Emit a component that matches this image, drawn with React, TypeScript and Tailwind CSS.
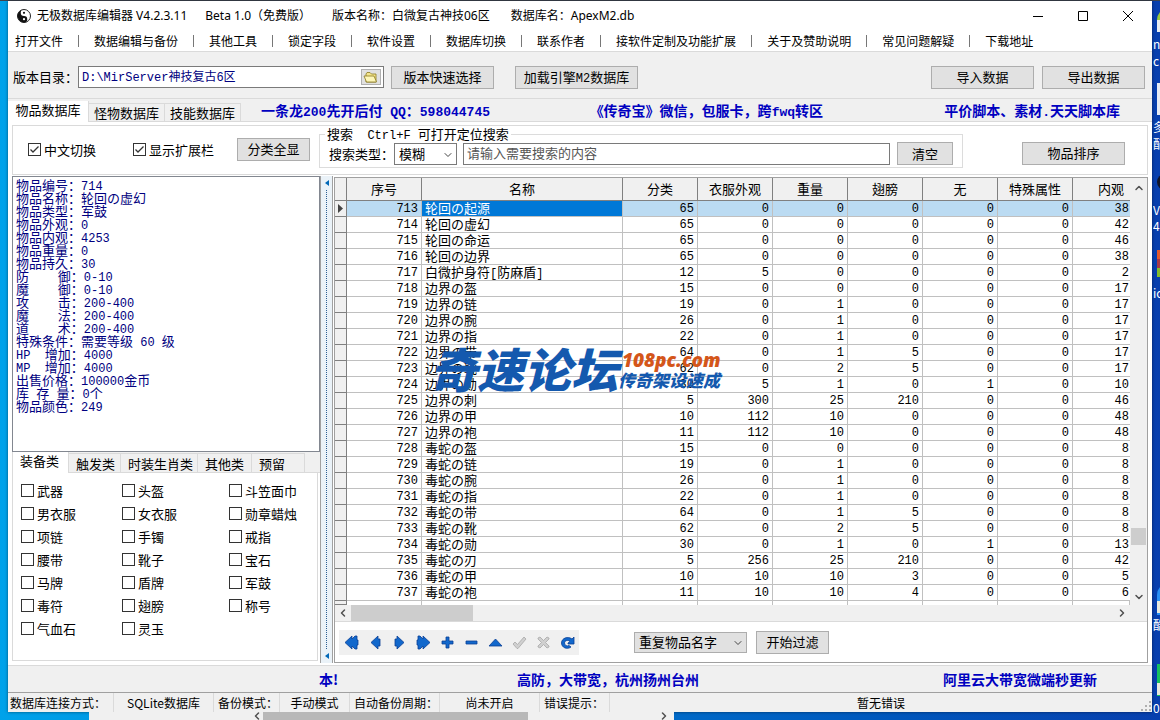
import { useState } from "react";
import { ChevronDown, ChevronLeft, ChevronRight, ChevronUp } from "lucide-react";

const menuItems = [
  "打开文件", "数据编辑与备份", "其他工具", "锁定字段", "软件设置", "数据库切换",
  "联系作者", "接软件定制及功能扩展", "关于及赞助说明", "常见问题解疑", "下载地址",
];

const details = [
  "物品编号：714",
  "物品名称：轮回の虚幻",
  "物品类型：军鼓",
  "物品外观：0",
  "物品内观：4253",
  "物品重量：0",
  "物品持久：30",
  "防    御：0-10",
  "魔    御：0-10",
  "攻    击：200-400",
  "魔    法：200-400",
  "道    术：200-400",
  "特殊条件：需要等级 60 级",
  "HP  增加：4000",
  "MP  增加：4000",
  "出售价格：100000金币",
  "库 存 量：0个",
  "物品颜色：249",
];

const categories = [
  ["武器", "头盔", "斗笠面巾"],
  ["男衣服", "女衣服", "勋章蜡烛"],
  ["项链", "手镯", "戒指"],
  ["腰带", "靴子", "宝石"],
  ["马牌", "盾牌", "军鼓"],
  ["毒符", "翅膀", "称号"],
  ["气血石", "灵玉"],
];

const categoryTabs = [
  { label: "装备类", width: "w-[57px]" },
  { label: "触发类", width: "w-[52px]" },
  { label: "时装生肖类", width: "w-[77px]" },
  { label: "其他类", width: "w-[54px]" },
  { label: "预留", width: "w-[53px]" },
];

const columns = ["序号", "名称", "分类", "衣服外观", "重量", "翅膀", "无", "特殊属性", "内观"];

type Row = [number, string, ...number[]];

const rows: Row[] = [
  [713, "轮回の起源", 65, 0, 0, 0, 0, 0, 38],
  [714, "轮回の虚幻", 65, 0, 0, 0, 0, 0, 42],
  [715, "轮回の命运", 65, 0, 0, 0, 0, 0, 46],
  [716, "轮回の边界", 65, 0, 0, 0, 0, 0, 38],
  [717, "白微护身符[防麻盾]", 12, 5, 0, 0, 0, 0, 2],
  [718, "边界の盔", 15, 0, 0, 0, 0, 0, 17],
  [719, "边界の链", 19, 0, 1, 0, 0, 0, 17],
  [720, "边界の腕", 26, 0, 1, 0, 0, 0, 17],
  [721, "边界の指", 22, 0, 1, 0, 0, 0, 17],
  [722, "边界の带", 64, 0, 1, 5, 0, 0, 17],
  [723, "边界の靴", 62, 0, 2, 5, 0, 0, 17],
  [724, "边界の勋", 30, 5, 1, 0, 1, 0, 10],
  [725, "边界の刺", 5, 300, 25, 210, 0, 0, 46],
  [726, "边界の甲", 10, 112, 10, 0, 0, 0, 48],
  [727, "边界の袍", 11, 112, 10, 0, 0, 0, 48],
  [728, "毒蛇の盔", 15, 0, 0, 0, 0, 0, 8],
  [729, "毒蛇の链", 19, 0, 1, 0, 0, 0, 8],
  [730, "毒蛇の腕", 26, 0, 1, 0, 0, 0, 8],
  [731, "毒蛇の指", 22, 0, 1, 0, 0, 0, 8],
  [732, "毒蛇の带", 64, 0, 1, 5, 0, 0, 8],
  [733, "毒蛇の靴", 62, 0, 2, 5, 0, 0, 8],
  [734, "毒蛇の勋", 30, 0, 1, 0, 1, 0, 13],
  [735, "毒蛇の刃", 5, 256, 25, 210, 0, 0, 42],
  [736, "毒蛇の甲", 10, 10, 10, 3, 0, 0, 5],
  [737, "毒蛇の袍", 11, 10, 10, 4, 0, 0, 6],
];

const navIcons = [
  { label: "首条", d: "M8 1 L1 7.5 L8 14 V11 L11 14 H13 V10 H14 V5 H13 V1 H11 L8 4 Z" },
  { label: "上一条", d: "M10 1 L3 7.5 L10 14 V11 H12 V4 H10 Z" },
  { label: "下一条", d: "M5 1 L12 7.5 L5 14 V11 H3 V4 H5 Z" },
  { label: "末条", d: "M7 1 L14 7.5 L7 14 V11 L4 14 H2 V10 H1 V5 H2 V1 H4 L7 4 Z" },
  { label: "新增", d: "M6 2 H9 V6 H13 V9 H9 V13 H6 V9 H2 V6 H6 Z" },
  { label: "删除", d: "M2 6 H13 V9 H2 Z" },
  { label: "编辑", d: "M7.5 4 L14 11 H1 Z" },
  { label: "保存", d: "M1 9 L3 7 L5.5 9.5 L12 2 L14 4 L6 13.5 H5 Z", off: true },
  { label: "取消", d: "M2 3 L4 2 L7.5 5.5 L11 2 L13 3 V4 L9.5 7.5 L13 11 V12 L11 13 L7.5 9.5 L4 13 L2 12 V11 L5.5 7.5 L2 4 Z", off: true },
  { label: "刷新", d: "M14 2 V9 H8 V8 L10 6.5 C8 4.5 4.5 5.5 4.5 8 C4.5 10.5 7 11.5 9 10.5 L11 12 C7 15 1.5 12.5 1.5 8 C1.5 3 8 1 12 4 Z" },
];

const status = [
  { text: "数据库连接方式：" },
  { text: "SQLite数据库", center: true },
  { text: "备份模式：" },
  { text: "手动模式", center: true },
  { text: "自动备份周期：" },
  { text: "尚未开启", center: true },
  { text: "错误提示：" },
  { text: "暂无错误", center: true },
];

// ASCII runs go into the mono face one size down, so two of them fill one ideograph
function Mix({ text, size = "text-xs" }: { text: string; size?: string }) {
  return (
    <>
      {text.split(/([\x20-\x7e]+)/).map((part, i) =>
        i % 2 ? (
          <span key={i} className={`font-['Liberation_Mono',monospace] leading-none ${size}`}>{part}</span>
        ) : (
          part
        )
      )}
    </>
  );
}

function Button({ text, className = "" }: { text: string; className?: string }) {
  return (
    <button
      type="button"
      className={`h-[23px] shrink-0 whitespace-pre border border-[#adadad] bg-[#e1e1e1] leading-[20px] hover:border-[#0078d7] hover:bg-[#e5f1fb] ${className}`}
    >
      <Mix text={text} />
    </button>
  );
}

function CheckBox({ label, checked = false }: { label: string; checked?: boolean }) {
  return (
    <label className="flex items-center gap-[3px] leading-[15px]">
      <span className="relative size-[13px]">
        <input
          type="checkbox"
          defaultChecked={checked}
          className="peer block size-[13px] appearance-none border border-[#333] bg-white"
        />
        <svg
          viewBox="0 0 13 13"
          className="pointer-events-none absolute inset-0 hidden size-[13px] peer-checked:block"
          fill="none"
          stroke="#333"
          strokeWidth="1.3"
        >
          <path d="M2.5 6.5 L5 9 L10.5 3.5" />
        </svg>
      </span>
      {label}
    </label>
  );
}

function TitleBar() {
  return (
    <header className="flex h-[29px] items-center justify-between bg-white pl-[9px] font-['Noto_Sans','Noto_Sans_CJK_SC',sans-serif] text-xs">
      <div className="flex items-center whitespace-nowrap">
        <svg viewBox="0 0 14 14" className="mr-1.5 size-[14px]">
          <circle cx="7" cy="7" r="6.5" fill="#fff" stroke="#222" />
          <path d="M7 .5 A6.5 6.5 0 0 0 7 13.5 A3.25 3.25 0 0 0 7 7 A3.25 3.25 0 0 1 7 .5" fill="#111" />
          <circle cx="7" cy="3.8" r="1.1" fill="#111" />
          <circle cx="7" cy="10.2" r="1.1" fill="#fff" />
        </svg>
        <h1 className="mr-[18px]">无极数据库编辑器 V4.2.3.11</h1>
        <span className="mr-[21px]">Beta 1.0（免费版）</span>
        <span className="mr-[21px]">版本名称：白微复古神技06区</span>
        <span>数据库名：ApexM2.db</span>
      </div>
      <div className="flex pr-0.5">
        {[
          { label: "最小化", d: "M0 5.5 H10" },
          { label: "最大化", d: "M.5 .5 H9.5 V9.5 H.5 Z" },
          { label: "关闭", d: "M0 0 L10 10 M10 0 L0 10" },
        ].map((b) => (
          <button key={b.label} type="button" aria-label={b.label} className="flex h-7 w-[45px] items-center justify-center hover:bg-[#e5e5e5]">
            <svg viewBox="0 0 10 10" className="size-[10px] overflow-visible" fill="none" stroke="#000">
              <path d={b.d} />
            </svg>
          </button>
        ))}
      </div>
    </header>
  );
}

function MenuBar() {
  return (
    <nav className="flex h-[22px] items-center gap-[15px] border-b border-[#dadada] bg-white pl-[7px] text-xs">
      {menuItems.map((item, i) => (
        <div key={item} className="flex items-center gap-[15px]">
          {i > 0 && <span className="h-3 w-px bg-[#777]" />}
          <button type="button" className="whitespace-nowrap leading-[18px]">{item}</button>
        </div>
      ))}
    </nav>
  );
}

function Toolbar() {
  return (
    <div className="flex h-[46px] items-center pt-1 pl-[5px] pr-[7px]">
      <label htmlFor="dir" className="w-[65px] shrink-0 whitespace-nowrap">版本目录：</label>
      <div className="flex h-[22px] w-[306px] items-center border border-[#7a7a7a] bg-white pr-0.5">
        <input
          id="dir"
          defaultValue="D:\MirServer神技复古6区"
          className="min-w-0 flex-1 bg-transparent pt-0.5 pl-[3px] font-['Liberation_Mono','Noto_Sans_CJK_SC',monospace] text-xs text-[#000080] outline-none"
        />
        <button type="button" aria-label="浏览" className="flex h-4 w-5 items-center justify-center border border-[#b0b0b0] bg-[#e1e1e1]">
          <svg viewBox="0 0 16 12" className="h-3 w-4">
            <path d="M3 11 V3 L4 1.5 H7 L8.5 3 H13 V11 Z" fill="#f3e48c" stroke="#8a7a20" strokeWidth=".8" />
            <path d="M1 5 H11 L13.5 11 H3.5 Z" fill="#fdf6b8" stroke="#8a7a20" strokeWidth=".8" />
          </svg>
        </button>
      </div>
      <Button text="版本快速选择" className="ml-[7px] w-[103px]" />
      <Button text="加载引擎M2数据库" className="ml-[21px] w-[123px]" />
      <div className="ml-auto flex gap-2">
        <Button text="导入数据" className="w-[103px]" />
        <Button text="导出数据" className="w-[103px]" />
      </div>
    </div>
  );
}

function DatabaseTabs() {
  const [active, setActive] = useState(0);
  return (
    <div className="flex h-6 items-end border-t border-[#dadada]">
      <div role="tablist" className="flex h-full items-end">
        {["物品数据库", "怪物数据库", "技能数据库"].map((t, i) => (
          <button
            key={t}
            type="button"
            role="tab"
            aria-selected={i === active}
            onClick={() => setActive(i)}
            className={
              i === active
                ? "h-[21px] w-[81px] border-r border-[#dadada] bg-white pb-1 leading-[17px]"
                : "h-[19px] w-[76px] border-t border-r border-b border-[#dadada] leading-[17px]"
            }
          >
            {t}
          </button>
        ))}
      </div>
      <div className="grid h-full flex-1 grid-cols-[329fr_355fr_208fr] items-center whitespace-nowrap border-b border-[#dadada] pl-5 text-sm font-bold text-[#0000c0]">
        <span><Mix size="text-[13px]" text="一条龙200先开后付 QQ：598044745" /></span>
        <span><Mix size="text-[13px]" text="《传奇宝》微信，包服卡，跨fwq转区" /></span>
        <span><Mix size="text-[13px]" text="平价脚本、素材.天天脚本库" /></span>
      </div>
    </div>
  );
}

function SearchPanel() {
  return (
    <div className="flex h-[50px] items-start border border-[#dadada] bg-white pr-[22px]">
      <div className="flex h-[46px] items-center pl-[15px]">
        <div className="w-[105px]"><CheckBox label="中文切换" checked /></div>
        <div className="w-[104px]"><CheckBox label="显示扩展栏" checked /></div>
        <Button text="分类全显" className="w-[73px]" />
      </div>
      <fieldset className="ml-[9px] h-[42px] w-[644px] border border-[#dcdcdc] pl-[9px]">
        <legend className="-ml-1 whitespace-pre px-0.5 leading-[16px]">
          <Mix text="搜索  Ctrl+F 可打开定位搜索" />
        </legend>
        <div className="flex items-center">
          <label htmlFor="kind" className="w-[65px] whitespace-nowrap">搜索类型：</label>
          <div className="relative">
            <select id="kind" className="block h-[22px] w-[63px] appearance-none border border-[#7a7a7a] bg-white pl-1 leading-[18px]">
              <option>模糊</option>
              <option>精确</option>
            </select>
            <ChevronDown size={12} strokeWidth={2} className="pointer-events-none absolute top-1.5 right-[3px] text-[#444]" />
          </div>
          <input
            aria-label="搜索内容"
            placeholder="请输入需要搜索的内容"
            className="ml-1.5 h-[22px] min-w-0 flex-1 border border-[#7a7a7a] bg-white pb-0.5 pl-[3px] placeholder:text-[#555] outline-none"
          />
          <Button text="清空" className="mr-[9px] ml-[7px] w-14" />
        </div>
      </fieldset>
      <div className="ml-auto flex h-[54px] items-center">
        <Button text="物品排序" className="w-[103px]" />
      </div>
    </div>
  );
}

function CategoryPanel() {
  const [active, setActive] = useState(0);
  return (
    <div>
      <div role="tablist" className="flex h-[21px] items-end bg-[#f0f0f0]">
        {categoryTabs.map((t, i) => (
          <button
            key={t.label}
            type="button"
            role="tab"
            aria-selected={i === active}
            onClick={() => setActive(i)}
            className={`${t.width} pl-[7px] text-left leading-[17px] whitespace-nowrap border-r border-[#dadada] ${
              i === active ? "h-[21px] border-l bg-white pb-1" : "h-5 border-t border-b"
            }`}
          >
            {t.label}
          </button>
        ))}
        <div className="flex-1 self-stretch border-b border-[#dadada]" />
      </div>
      <div className="mr-0.5 border border-t-0 border-[#dadada] bg-white pt-1.5 pb-5 pl-2">
        {categories.map((line) => (
          <div key={line[0]} className="grid h-[23px] grid-cols-[101px_107px_1fr] items-center">
            {line.map((c) => <CheckBox key={c} label={c} />)}
          </div>
        ))}
      </div>
    </div>
  );
}

function Splitter() {
  return (
    <div className="flex w-[13px] flex-col items-center border-x border-[#a0a0a0] bg-[#eaf2f8] py-1">
      <svg viewBox="0 0 4 6" className="h-1.5 w-1"><path d="M4 0 L0 3 L4 6 Z" fill="#0068b8" /></svg>
      <div className="my-1 flex-1 border-l border-dotted border-[#2b5f94]" />
      <svg viewBox="0 0 4 6" className="h-1.5 w-1"><path d="M4 0 L0 3 L4 6 Z" fill="#0068b8" /></svg>
    </div>
  );
}

function ItemTable() {
  const head = "h-[23px] border-r border-b border-[#808080] bg-[#f0f0f0] p-0 font-normal";
  const gutter = "border-r border-b border-[#808080] bg-[#f0f0f0] p-0";
  return (
    <table className="w-full table-fixed border-separate border-spacing-0">
      <colgroup>
        <col className="w-3" />
        <col className="w-[75px]" />
        <col />
        {columns.slice(2, 8).map((c) => <col key={c} className="w-[75px]" />)}
        <col className="w-[57px]" />
      </colgroup>
      <thead>
        <tr>
          <th className={head} aria-label="当前行" />
          {columns.map((c, i) => (
            <th key={c} className={i === 8 ? "h-[23px] border-b border-[#808080] bg-[#f0f0f0] p-0 pr-1.5 text-right font-normal" : head}>
              {c}
            </th>
          ))}
        </tr>
      </thead>
      <tbody>
        {rows.map((row, r) => (
          <tr key={row[0]} className={r === 0 ? "bg-[#bbdbf2]" : ""}>
            <td className={gutter}>
              {r === 0 && (
                <svg viewBox="0 0 5 9" className="mx-auto h-[9px] w-[5px]"><path d="M0 0 L5 4.5 L0 9 Z" fill="#444" /></svg>
              )}
            </td>
            {row.map((cell, i) =>
              i === 1 ? (
                <td
                  key={i}
                  className={`h-4 border-r border-b border-[#c0c0c0] p-0 pb-0.5 pl-[3px] ${
                    r === 0 ? "bg-[#0078d7] text-white" : ""
                  }`}
                >
                  <div className="h-[13px] leading-[13px] whitespace-nowrap">
                    <Mix text={String(cell)} />
                  </div>
                </td>
              ) : (
                <td
                  key={i}
                  className={`h-4 border-b border-[#c0c0c0] p-0 pt-0.5 text-right font-['Liberation_Mono',monospace] text-xs leading-[13px] ${
                    i === 8 ? "pr-px" : "border-r pr-[3px]"
                  }`}
                >
                  {cell}
                </td>
              )
            )}
          </tr>
        ))}
        <tr className="h-1">
          <td className={gutter} />
          {columns.map((c) => <td key={c} className="border-r border-[#c0c0c0] p-0" />)}
        </tr>
      </tbody>
    </table>
  );
}

function Watermark() {
  return (
    <div className="pointer-events-none absolute top-[165px] left-[95px] flex items-center whitespace-nowrap font-black text-[#1459ae] italic">
      <span className="text-[47px] leading-[50px]">奇速论坛</span>
      <div className="pt-1">
        <div className="pl-1 font-['Open_Sans',sans-serif] text-[19px] leading-[20px] font-extrabold text-[#d4561a]">108pc.com</div>
        <div className="text-[17px] leading-[20px]">传奇架设速成</div>
      </div>
    </div>
  );
}

function GridPanel() {
  return (
    <div className="flex min-w-0 flex-1 flex-col border border-[#a0a0a0] bg-white">
      <div className="relative flex">
        <div className="min-w-0 flex-1">
          <ItemTable />
          <div className="flex h-4 items-center bg-[#f0f0f0]">
            <ChevronLeft size={12} strokeWidth={3} className="mx-0.5 text-[#505050]" />
            <div className="h-4 w-[122px] bg-[#cdcdcd]" />
            <ChevronRight size={12} strokeWidth={3} className="mr-0.5 ml-auto text-[#505050]" />
          </div>
        </div>
        <div className="flex w-[17px] flex-col items-center bg-[#f0f0f0] pt-1 pb-[18px]">
          <ChevronUp size={12} strokeWidth={3} className="text-[#505050]" />
          <div className="flex-1" />
          <div className="h-[17px] w-[15px] bg-[#cdcdcd]" />
          <div className="h-[46px]" />
          <ChevronDown size={12} strokeWidth={3} className="text-[#505050]" />
        </div>
        <Watermark />
      </div>
      <div className="flex flex-1 items-center border-t border-[#dadada] pl-1">
        <div className="flex h-[25px] w-60 bg-[#f0f0f0]">
          {navIcons.map((n) => (
            <button key={n.label} type="button" aria-label={n.label} disabled={n.off} className="flex w-6 items-center justify-center">
              <svg viewBox="0 0 15 15" className="size-[15px]">
                <path d={n.d} fill={n.off ? "#d0d0d0" : "#1268cc"} stroke={n.off ? "#a8a8a8" : "#0b3f94"} strokeWidth=".8" />
              </svg>
            </button>
          ))}
        </div>
        <div className="relative ml-[55px]">
          <select aria-label="过滤条件" className="block h-[21px] w-[113px] appearance-none border border-[#adadad] bg-[#e1e1e1] pl-1 leading-[18px]">
            <option>重复物品名字</option>
          </select>
          <ChevronDown size={12} strokeWidth={2} className="pointer-events-none absolute top-[5px] right-[3px] text-[#444]" />
        </div>
        <Button text="开始过滤" className="ml-[9px] w-[73px]" />
      </div>
    </div>
  );
}

// Shortcuts peeking out from behind the right edge of the window
function DesktopIcons() {
  const caption = "absolute left-0 whitespace-nowrap text-xs leading-4 text-white";
  return (
    <aside aria-hidden="true" className="absolute inset-y-0 right-0 w-[7px] overflow-hidden">
      <div className="absolute top-2 left-1 h-6 w-6 rounded-full bg-[#9ccb3b]" />
      <div className="absolute top-5 left-1 h-3 w-3 bg-[#e8ecef]" />
      <span className={`${caption} top-9`}>n</span>
      <span className={`${caption} top-[53px]`}>c</span>
      <div className="absolute top-[83px] left-1 h-8 w-6 bg-[#e6eaf2]" />
      <span className={`${caption} top-[119px]`}>多</span>
      <span className={`${caption} top-[136px]`}>配</span>
      <div className="absolute top-[174px] left-1 h-4 w-6 rounded-full bg-[#101428]" />
      <span className={`${caption} top-[202px]`}>V</span>
      <span className={`${caption} top-[218px]`}>4.</span>
      <div className="absolute top-[250px] left-1 h-[9px] w-6 bg-[#e2582e]" />
      <div className="absolute top-[259px] left-1 h-[9px] w-6 bg-[#a83848]" />
      <div className="absolute top-[268px] left-1 h-[9px] w-6 bg-[#84bd2c]" />
      <span className={`${caption} top-[285px]`}>ic</span>
      <div className="absolute top-[583px] left-1 h-8 w-6 rounded-tl-xl bg-[#2a90f4]" />
      <div className="absolute top-[601px] left-1 h-3 w-3 bg-[#e8e8dc]" />
      <span className={`${caption} top-[617px]`}>酷</span>
      <div className="absolute top-[664px] left-1 h-8 w-6 bg-[#16c060]" />
      <div className="absolute top-[683px] left-1 h-3 w-3 bg-[#e8e8dc]" />
      <span className={`${caption} top-[700px]`}>02</span>
    </aside>
  );
}

export default function App() {
  return (
    <div className="relative flex min-h-screen flex-col bg-linear-to-r from-[#00a2ea] to-[#083fae] font-['Noto_Sans_CJK_SC',sans-serif] text-[13px] text-black">
      <div className="h-px bg-[#3c4450]" />
      <div className="mx-2 flex flex-1 flex-col bg-[#f0f0f0] shadow-[0_0_3px_#00000080]">
        <TitleBar />
        <MenuBar />
        <Toolbar />
        <DatabaseTabs />
        <main className="flex flex-1 flex-col border-b border-[#dadada] bg-white px-1 pt-[3px] pb-0.5">
          <SearchPanel />
          <div className="mt-px flex flex-1">
            <section className="flex w-[308px] flex-col pb-0.5">
              <div className="flex-1 border border-[#828790] bg-white pt-px pl-[3px] text-[#000080]">
                {details.map((line, i) => (
                  <p key={i} className="h-[13px] whitespace-pre leading-[13px]">
                    <Mix text={line} />
                  </p>
                ))}
              </div>
              <CategoryPanel />
            </section>
            <Splitter />
            <div className="flex min-w-0 flex-1 pt-px pl-px">
              <GridPanel />
            </div>
          </div>
        </main>
        <div className="grid h-[27px] grid-cols-[198fr_426fr_209fr] items-center whitespace-nowrap border-b border-[#a0a0a0] pl-[311px] text-sm font-bold text-[#0000c0]">
          <span>本!</span>
          <span>高防，大带宽，杭州扬州台州</span>
          <span>阿里云大带宽微端秒更新</span>
        </div>
        <footer className="relative grid h-[19px] grid-cols-[106px_100px_66px_70px_90px_100px_70px_1fr] text-xs leading-[19px] whitespace-nowrap">
          {status.map((s, i) => (
            <span
              key={s.text}
              className={`${s.center ? "text-center" : i === 0 ? "pl-0.5" : "pl-1"} ${i < 7 ? "border-r border-[#dadada]" : ""}`}
            >
              {s.text}
            </span>
          ))}
          <svg viewBox="0 0 10 10" className="absolute right-px bottom-px size-[10px]" fill="#b0b0b0">
            <path d="M8 0h2v2h-2z M4 4h2v2h-2z M8 4h2v2h-2z M0 8h2v2h-2z M4 8h2v2h-2z M8 8h2v2h-2z" />
          </svg>
        </footer>
      </div>
      {/* scroll bar of the window behind */}
      <div className="flex h-2 pl-[89px]">
        <div className="flex w-[585px] bg-[#f0f0f0]">
          <ChevronLeft size={12} strokeWidth={3} className="ml-[162px] -mt-0.5 text-[#505050]" />
          <div className="h-2 w-[265px] bg-[#b8b8b8]" />
          <ChevronRight size={12} strokeWidth={3} className="-mt-0.5 mr-1 ml-auto text-[#505050]" />
        </div>
      </div>
      <DesktopIcons />
    </div>
  );
}
